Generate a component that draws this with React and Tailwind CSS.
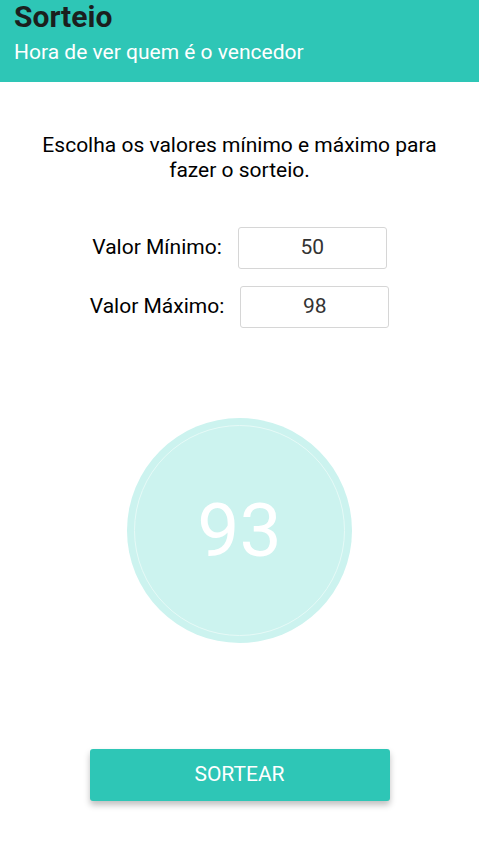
export default function App() {
  return (
    <div className="min-h-[845px] bg-white font-['Roboto',sans-serif]">
      <header className="h-[82px] bg-[#2ec6b6] px-[14px]">
        <h1 className="text-[30px] font-bold leading-[34px] text-[#1b1f1e]">Sorteio</h1>
        <p className="mt-[6px] text-[21px] leading-[25px] text-white">Hora de ver quem é o vencedor</p>
      </header>

      <p className="mx-auto mt-[51px] w-[410px] text-center text-[21px] leading-[25px] text-black">
        Escolha os valores mínimo e máximo para fazer o sorteio.
      </p>

      <div className="mt-[44px] flex flex-col items-center gap-[17px]">
        <div className="flex items-center gap-[16px]">
          <span className="text-[21px] text-black">Valor Mínimo:</span>
          <div className="flex h-[42px] w-[149px] items-center justify-center rounded-[3px] border border-[#d6d6d6] text-[21px] text-[#333]">
            50
          </div>
        </div>
        <div className="flex items-center gap-[16px]">
          <span className="text-[21px] text-black">Valor Máximo:</span>
          <div className="flex h-[42px] w-[149px] items-center justify-center rounded-[3px] border border-[#d6d6d6] text-[21px] text-[#333]">
            98
          </div>
        </div>
      </div>

      <div className="mt-[90px] flex justify-center">
        <div className="flex h-[225px] w-[225px] items-center justify-center rounded-full bg-[#ccf3ef] p-[7px]">
          <div className="flex h-full w-full items-center justify-center rounded-full border border-[#e6faf7]">
            <span className="text-[75px] leading-none text-white">93</span>
          </div>
        </div>
      </div>

      <div className="mt-[106px] flex justify-center">
        <button className="h-[52px] w-[300px] rounded-[3px] bg-[#2ec6b6] text-[21px] text-white shadow-[0_4px_6px_rgba(0,0,0,0.25)]">
          SORTEAR
        </button>
      </div>
    </div>
  )
}
